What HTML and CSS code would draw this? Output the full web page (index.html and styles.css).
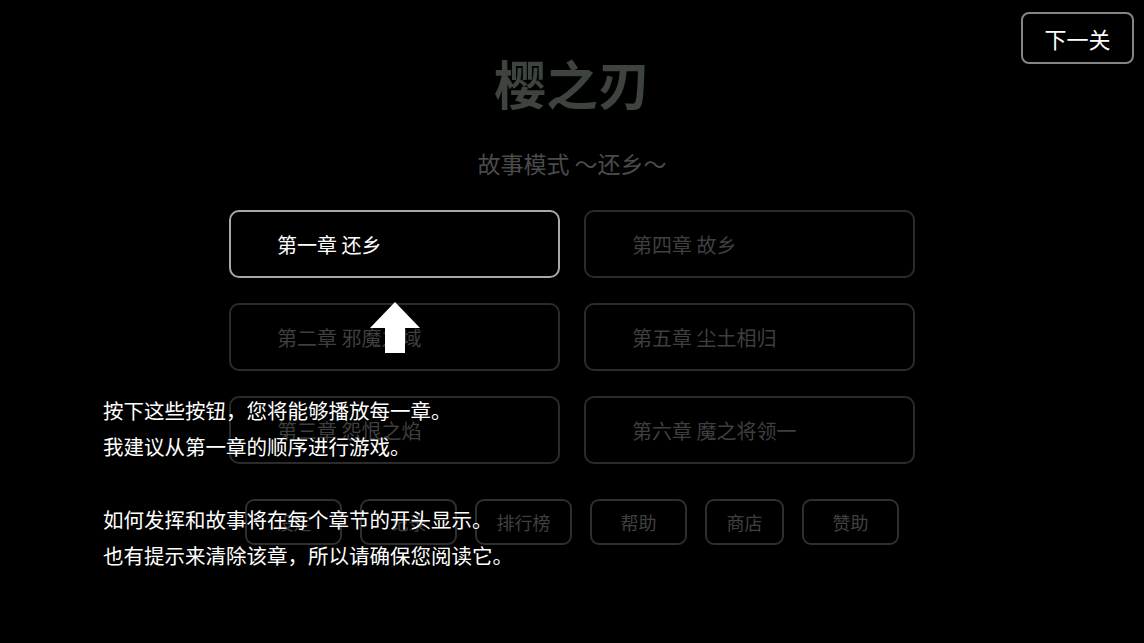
FILE: index.html
```html
<!DOCTYPE html>
<html lang="zh-CN">
  <head>
    <meta charset="utf-8">
    <title>樱之刃</title>
    <link rel="stylesheet" href="styles.css">
  </head>

  <body>
    <button class="nextStage">下一关</button>

    <main class="menu">
      <h1 class="title">樱之刃</h1>
      <p class="subtitle">故事模式 〜还乡〜</p>

      <div class="chapters">
        <button class="chapter active">第一章 还乡</button>
        <button class="chapter">第四章 故乡</button>
        <button class="chapter">第二章 邪魔之域</button>
        <button class="chapter">第五章 尘土相归</button>
        <button class="chapter">第三章 怨恨之焰</button>
        <button class="chapter">第六章 魔之将领一</button>
      </div>

      <div class="tools">
        <button class="tool">设定</button>
        <button class="tool">记录</button>
        <button class="tool">排行榜</button>
        <button class="tool">帮助</button>
        <button class="tool narrow">商店</button>
        <button class="tool">赞助</button>
      </div>
    </main>

    <!-- tutorial hint drawn over the menu -->
    <svg class="hintArrow" width="50" height="51" viewBox="0 0 50 51">
      <polygon points="25,0 50,26 35,26 35,51 15,51 15,26 0,26" fill="#fff" />
    </svg>
    <div class="hint">
      <p>按下这些按钮，您将能够播放每一章。<br>我建议从第一章的顺序进行游戏。</p>
      <p>如何发挥和故事将在每个章节的开头显示。<br>也有提示来清除该章，所以请确保您阅读它。</p>
    </div>
  </body>
</html>
```

FILE: styles.css
```css
html,
body {
  height: 100%;
}
body {
  margin: 0;
  background: #000;
  color: #fff;
  font-family: "Noto Sans CJK SC", "Noto Sans", sans-serif;
  overflow: hidden;
}
button {
  font-family: inherit;
  background: #000;
  cursor: pointer;
}

.nextStage {
  position: absolute;
  top: 12px;
  right: 10px;
  width: 113px;
  height: 52px;
  border: 2px solid #858585;
  border-radius: 8px;
  color: #fff;
  font-size: 22px;
}

.menu {
  display: flex;
  flex-flow: column;
  align-items: center;
  padding-top: 53px;
}
.title {
  margin: 0;
  height: 60px;
  line-height: 60px;
  font-size: 52px;
  font-weight: bold;
  color: #3d433d;
}
.subtitle {
  margin: 35px 0 0;
  height: 30px;
  line-height: 30px;
  font-size: 23px;
  color: #4b4b4b;
}

.chapters {
  display: grid;
  grid-template-columns: 331px 331px;
  grid-auto-rows: 68px;
  gap: 25px 24px;
  margin-top: 32px;
}
.chapter {
  display: flex;
  align-items: center;
  padding: 0 0 0 46px;
  border: 2px solid #2b2b2b;
  border-radius: 10px;
  color: #3f3f3f;
  font-size: 20px;
  text-align: left;
}
.chapter.active {
  border-color: #a8a8a8;
  color: #fff;
}

.tools {
  display: flex;
  gap: 18px;
  margin-top: 35px;
}
.tool {
  width: 97px;
  height: 46px;
  padding: 0;
  border: 2px solid #2f2f2f;
  border-radius: 9px;
  color: #404040;
  font-size: 18px;
}
.tool.narrow {
  width: 79px;
}

.hintArrow {
  position: absolute;
  left: 370px;
  top: 302px;
}
.hint {
  position: absolute;
  left: 103px;
  top: 392px;
  font-size: 20.5px;
  line-height: 36px;
  color: #fff;
  text-shadow: 0 0 2px #000;
}
.hint p {
  margin: 0;
}
.hint p + p {
  margin-top: 37px;
}
```
